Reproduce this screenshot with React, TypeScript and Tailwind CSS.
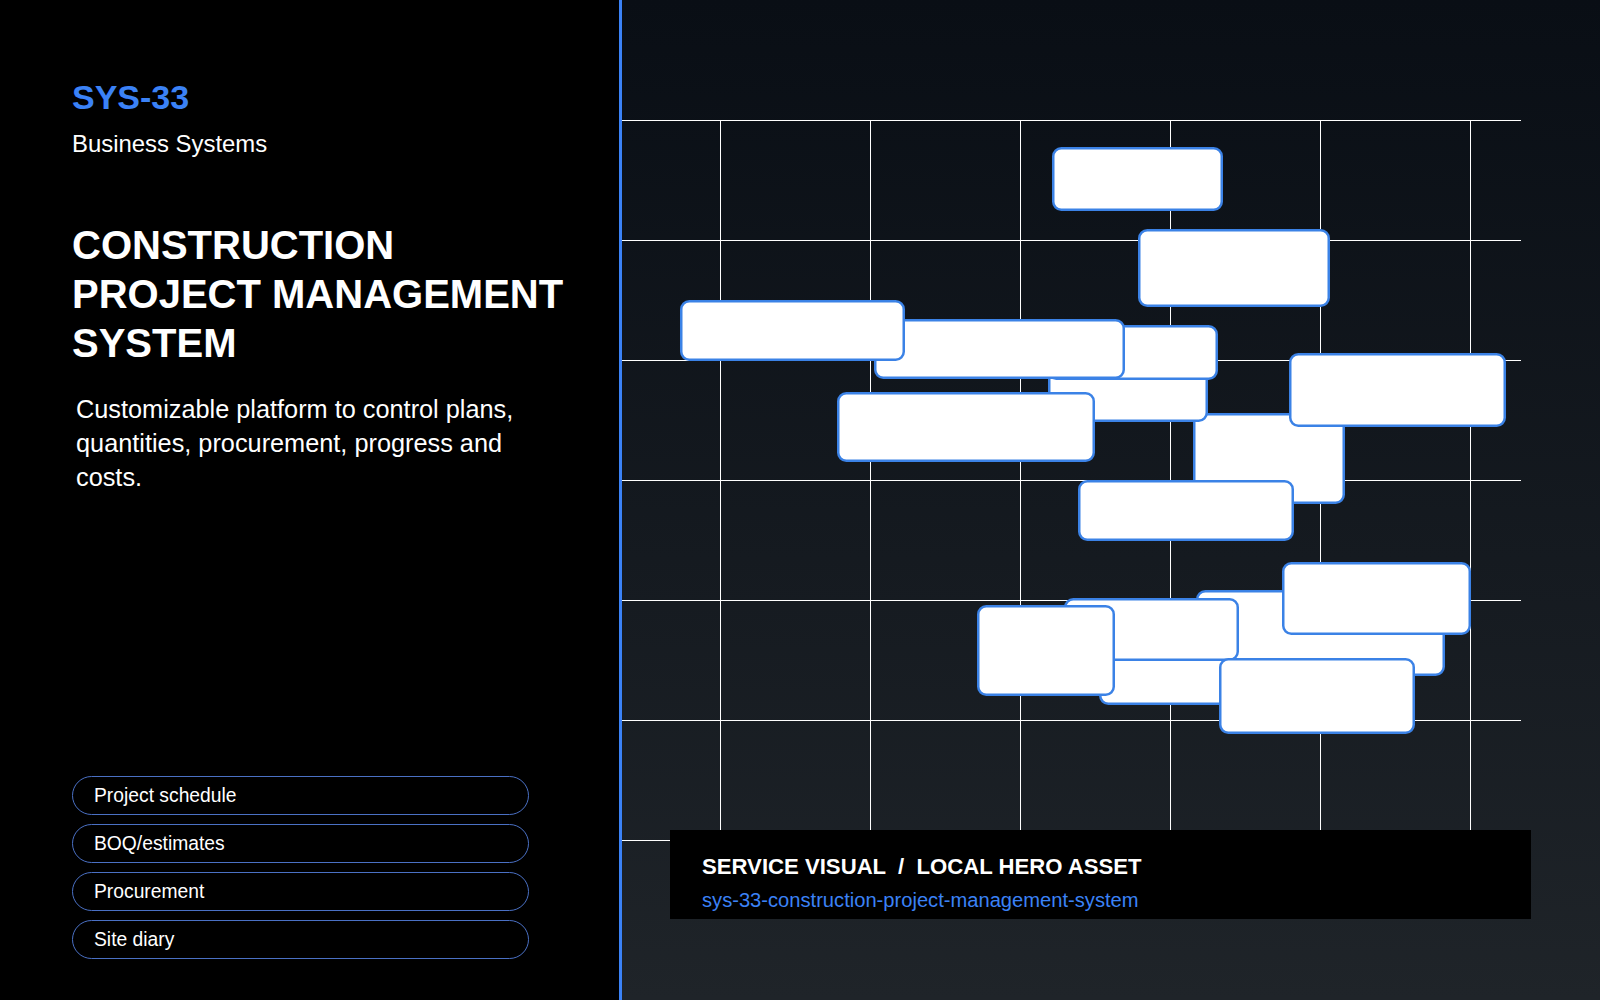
import React from 'react';

const columns = [720, 870, 1020, 1170, 1320, 1470];
const rows = [120, 240, 360, 480, 600, 720, 840];

// outer edges as x1, y1, x2, y2, in back-to-front order
const blocks = [
  [1052, 147, 1223, 211],
  [1138, 229, 1330, 307],
  [1193, 413, 1345, 504],
  [1048, 360, 1208, 422],
  [1047, 325, 1218, 380],
  [874, 319, 1125, 379],
  [680, 300, 905, 361],
  [837, 392, 1095, 462],
  [1289, 353, 1506, 427],
  [1078, 480, 1294, 541],
  [1196, 590, 1445, 676],
  [1099, 640, 1230, 705],
  [1282, 562, 1471, 635],
  [1064, 598, 1239, 661],
  [977, 605, 1115, 696],
  [1219, 658, 1415, 734],
];

const modules = ['Project schedule', 'BOQ/estimates', 'Procurement', 'Site diary'];

const App: React.FC = () => {
  return (
    <div className="flex h-[1000px] w-[1600px] overflow-hidden bg-black font-['Liberation_Sans',Arial,sans-serif] text-white">
      <aside className="flex w-[622px] shrink-0 flex-col border-r-[3px] border-[#3b82f6] bg-black pt-[77px] pb-[41px] pl-[72px]">
        <div className="text-[34px] leading-[40px] font-bold text-[#3b82f6]">SYS-33</div>
        <div className="mt-[12px] text-[23.9px] leading-[30px]">Business Systems</div>
        <h1 className="mt-[62px] text-[40px] leading-[49px] font-bold">
          CONSTRUCTION
          <br />
          PROJECT MANAGEMENT
          <br />
          SYSTEM
        </h1>
        <p className="mt-[24px] ml-[4px] w-[460px] text-[25.3px] leading-[34px]">
          Customizable platform to control plans, quantities, procurement, progress and costs.
        </p>
        <ul className="mt-auto flex w-[457px] flex-col gap-[9px]">
          {modules.map((item) => (
            <li
              key={item}
              className="flex h-[39px] items-center rounded-full border border-[#4a70c4] pt-[2px] pl-[21px] text-[19.3px]"
            >
              {item}
            </li>
          ))}
        </ul>
      </aside>

      <main className="relative flex-1 bg-gradient-to-b from-[#090e15] to-[#1f2429]">
        <svg className="block h-full w-full" viewBox="622 0 978 1000">
          {rows.map((y) => (
            <line key={y} x1={622} x2={1521} y1={y + 0.5} y2={y + 0.5} stroke="#fff" />
          ))}
          {columns.map((x) => (
            <line key={x} x1={x + 0.5} x2={x + 0.5} y1={120} y2={900} stroke="#fff" />
          ))}
          {blocks.map(([x1, y1, x2, y2]) => (
            <rect
              key={`${x1}-${y1}`}
              x={x1 + 1.25}
              y={y1 + 1.25}
              width={x2 - x1 - 2.5}
              height={y2 - y1 - 2.5}
              rx={8}
              fill="#fff"
              stroke="#3b82e6"
              strokeWidth={2.5}
            />
          ))}
        </svg>

        <div className="absolute top-[830px] left-[48px] h-[89px] w-[861px] bg-black pt-[21px] pl-[32px]">
          <div className="text-[22.15px] leading-[32px] font-bold whitespace-pre">SERVICE VISUAL  /  LOCAL HERO ASSET</div>
          <div className="mt-[4px] text-[20.15px] leading-[26px] text-[#3b82f6]">sys-33-construction-project-management-system</div>
        </div>
      </main>
    </div>
  );
};

export default App;
